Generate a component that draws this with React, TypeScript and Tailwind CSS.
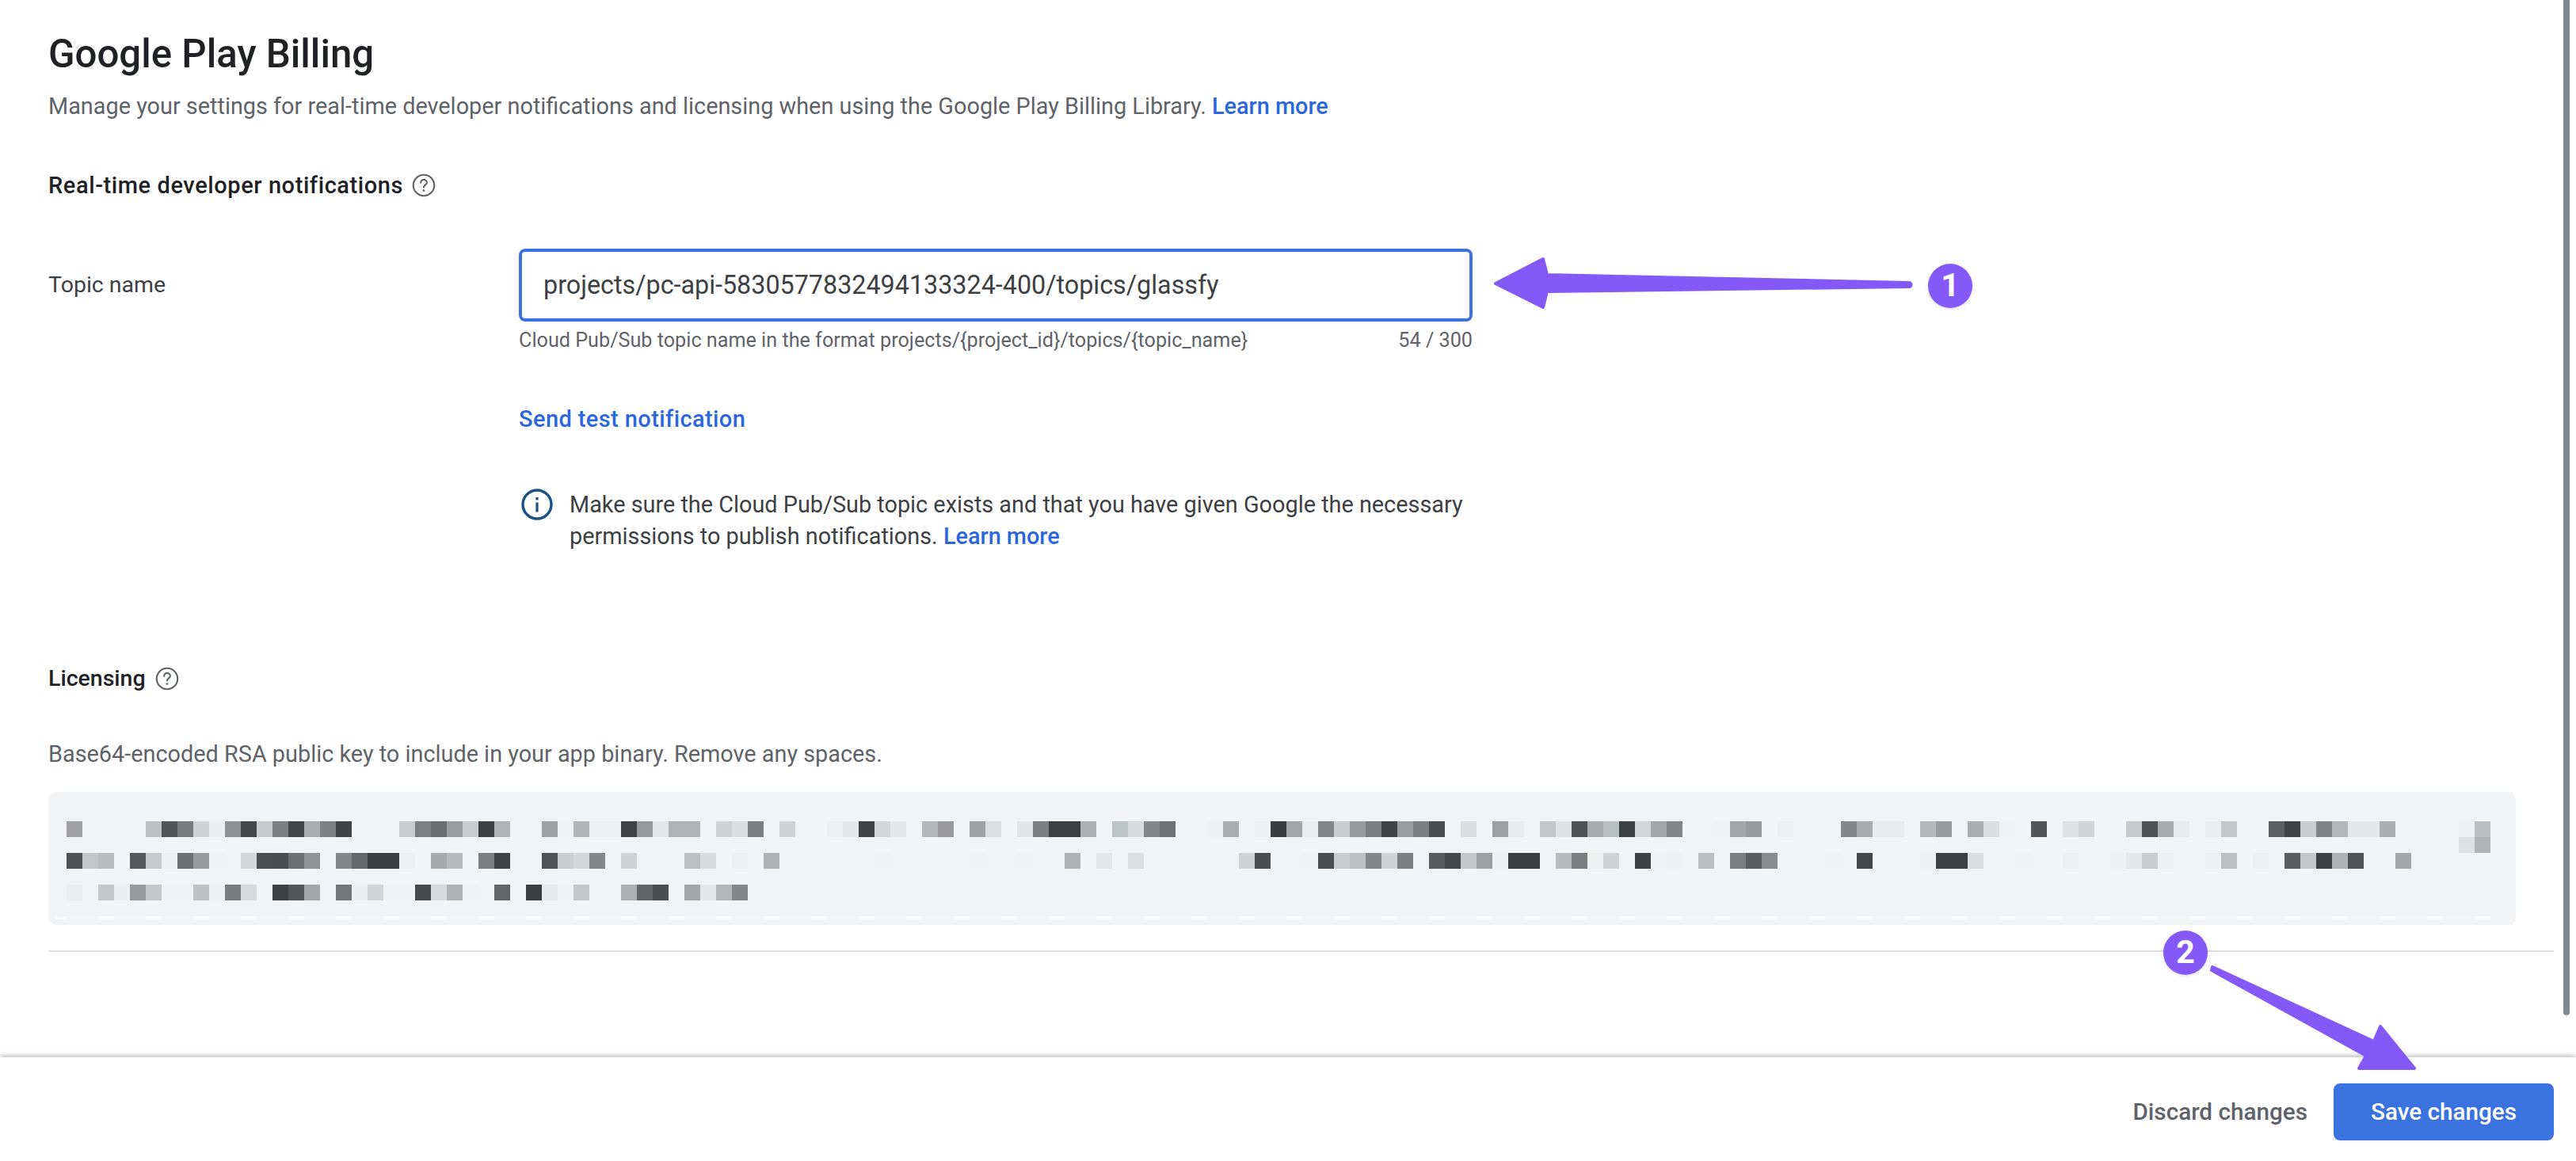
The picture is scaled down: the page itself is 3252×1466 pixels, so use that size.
import React from "react";

const PURPLE = "#8558f8";

const row1 =
  "0:a0a0a2 5:bdc1c3 6:545557 7:7a7b7d 8:d0d1d3 9:eceef0 10:8f9092 11:45484b 12:c9cacc 13:7d7e80 14:434447 15:aaabad 16:7f8082 17:414346 21:cbcccf 22:7f8082 23:6c6d70 24:9b9c9e 25:cbcccf 26:3e4043 27:b0b3b6 30:9fa0a2 31:f0f1f3 32:b4b5b7 33:eeeff1 34:eeeff1 35:404245 36:97989a 37:e3e5e6 38:b1b2b4 39:b1b2b4 41:d0d1d4 42:dcdde0 43:7c7d80 45:d0d1d3 48:eeeff1 49:e6e7e9 50:404245 51:d5d6d8 52:e6e7e9 54:b6b7b9 55:99999b 57:a0a1a3 58:dddee0 60:e2e4e5 61:7c7d7f 62:3d4043 63:3d4043 64:afb0b2 66:bec3c4 67:d9dadc 68:858688 69:717274 72:eff0f2 73:abacae 75:eeeff1 76:3a3d3f 77:a1a5a5 78:ebecee 79:838486 80:cbccce 81:98999b 82:7c7d7f 83:404245 84:9b9c9e 85:7e7f81 86:4a4e51 88:dcdde0 90:9e9fa1 91:eaebed 93:c5c6c8 94:e0e1e3 95:505154 96:a9aaac 97:b9bebe 98:3f4245 99:d3d6d7 100:a5a6a8 101:848587 104:f0f1f3 105:a5a6a8 106:9a9b9d 108:eeeff1 112:858688 113:a9aaac 114:e9eaec 115:e9eaec 117:b6b7b9 118:9a9b9d 120:abaeb0 121:dcdde0 122:f0f1f2 124:535457 126:dfe0e2 127:d2d3d5 130:c9cacc 131:4f5255 132:a9aaac 133:e9eaec 135:ebecee 136:c5c7c8 139:5e5f61 140:404245 141:cbcccf 142:818284 143:b5b6b8 144:e6e7e9 145:e6e7e9 146:acadaf 151:eff0f2 152:bdbec0";
const rowGap = "151:dfe0e2 152:b1b2b4";
const row2 =
  "0:4f5255 1:c5c6c8 2:bbbcbe 4:55585b 5:c9cacc 6:eeeff1 7:6e6f71 8:9a9b9d 9:f0f1f3 11:d5d6d8 12:4c5053 13:4b4e51 14:6e6f71 15:919294 17:858688 18:67686a 19:3c3f42 20:3c3f42 21:eeeff1 23:a8a9ab 24:b9babc 26:7c7d7f 27:404245 30:505356 31:cbcccf 32:d5d6d8 33:858688 35:d0d1d3 39:bfc0c2 40:dadbdd 42:eeeff1 44:b0b1b3 51:f0f1f3 57:f0f1f3 60:f0f1f3 63:b0b1b3 65:e4e5e7 67:dddee0 74:d0d1d3 75:4c4e52 78:f0f1f3 79:4b4f52 80:cbccce 81:bcc0c0 82:858688 83:d0d1d3 84:7e7f81 86:585a5d 87:45484b 88:c6c7c9 89:9e9fa1 90:eff0f2 91:3b3e41 92:3b3e41 94:b9babc 95:7c7d7f 96:eef0f0 97:d0d1d3 99:3f4245 100:f0f1f3 101:eff0f2 103:bcbdbf 105:7c7d7f 106:5b5e61 107:8a8d8e 111:f0f1f2 113:45484b 117:eff0f2 118:3e4043 119:3e4043 120:dcdde0 123:f0f1f3 126:eeeff1 129:eef1f2 130:e6e7e9 131:cbcccf 132:eeeff1 135:eeeff1 136:bdc0c1 138:eeeff1 140:5c5d60 141:c5c6c8 142:3e4043 143:b0b1b3 144:505356 147:a5a8aa";
const row3 =
  "0:ebecee 2:c5c6c8 3:eceef0 4:98999b 5:c6c7c9 6:eff2f3 7:eff2f3 8:c0c1c3 9:eff0f2 10:7a7b7d 11:d8d9db 13:3e4144 14:54575a 15:a5a6a8 17:747577 18:eceef0 19:d2d3d5 20:f0f2f3 21:f0f2f3 22:47494c 23:d8d9db 24:b0b1b3 25:eff2f3 27:646568 29:3c3f42 30:e8e9eb 31:f0f1f3 32:c5c6c8 35:aeafb1 36:636467 37:4c4e51 39:a3a4a6 40:e6e7e9 41:b5b6b8 42:858688";

const CELLS = Array.from({ length: 153 }, (_, i) => i);

function parseRow(data: string) {
  const out: Record<number, string> = {};
  data.split(" ").forEach((part) => {
    const [n, hex] = part.split(":");
    out[Number(n)] = "#" + hex;
  });
  return out;
}

function PixelRow({ data }: { data: string }) {
  const row = parseRow(data);
  return (
    <div className="flex h-5">
      {CELLS.map((i) => (
        <div key={i} className="h-5 w-5 shrink-0" style={{ backgroundColor: row[i] }} />
      ))}
    </div>
  );
}

function HelpIcon() {
  return (
    <svg width="30" height="30" viewBox="0 0 24 24" fill="none" className="shrink-0">
      <circle cx="12" cy="12" r="10.6" stroke="#5f6368" strokeWidth="1.7" />
      <path
        d="M8.9 9.4a3.1 3.1 0 0 1 6.2 0c0 2-3.1 2.3-3.1 4.6"
        stroke="#5f6368"
        strokeWidth="1.7"
        strokeLinecap="round"
      />
      <circle cx="12" cy="17.2" r="1.1" fill="#5f6368" />
    </svg>
  );
}

function InfoIcon() {
  return (
    <svg width="40" height="40" viewBox="0 0 40 40" fill="none" className="shrink-0">
      <circle cx="20" cy="20" r="18" stroke="#1a5285" strokeWidth="3.4" />
      <rect x="18.4" y="17.5" width="3.2" height="12" fill="#1a5285" />
      <rect x="18.4" y="11" width="3.2" height="3.4" fill="#1a5285" />
    </svg>
  );
}

function Badge({ n, className }: { n: string; className: string }) {
  return (
    <div
      className={`absolute flex h-14 w-14 items-center justify-center rounded-full bg-[#8558f8] text-[41px] font-bold text-white shadow-[0_1px_4px_rgba(0,0,0,0.15)] ${className}`}
    >
      {n}
    </div>
  );
}

export default function App() {
  return (
    <div className="relative flex h-[1466px] w-[3252px] flex-col overflow-hidden bg-white font-['Roboto',sans-serif] text-[#202124]">
      <main className="min-h-0 flex-1 pl-[61px] pr-[28px]">
        <h1 className="mt-[40px] text-[49.2px] leading-[56px] font-medium text-[#202124]">Google Play Billing</h1>
        <p className="mt-[18px] text-[28.85px] leading-[40px] text-[#5f6368]">
          Manage your settings for real-time developer notifications and licensing when using the Google Play Billing
          Library. <span className="font-medium text-[#2a66dc]">Learn more</span>
        </p>

        <div className="mt-[60px] flex h-10 items-center gap-[11px]">
          <h2 className="text-[29px] leading-10 font-medium tracking-[0.58px] text-[#202124]">
            Real-time developer notifications
          </h2>
          <HelpIcon />
        </div>

        <div className="mt-[60px] flex">
          <div className="w-[594px] pt-[26px] text-[28.5px] leading-10 text-[#3c4043]">Topic name</div>
          <div className="w-[1204px]">
            <div className="flex h-[92px] items-center rounded-[8px] border-4 border-[#3a72e0] pl-[27px] text-[32.3px] text-[#3c4043]">
              projects/pc-api-5830577832494133324-400/topics/glassfy
            </div>
            <div className="mt-[10px] flex items-center justify-between text-[25.2px] leading-7 text-[#5f6368]">
              <span>Cloud Pub/Sub topic name in the format projects/{"{project_id}"}/topics/{"{topic_name}"}</span>
              <span>54 / 300</span>
            </div>
            <div className="mt-[65px] text-[29px] leading-10 font-medium tracking-[0.4px] text-[#2a66dc]">
              Send test notification
            </div>
            <div className="mt-[68px] flex gap-[21px] pl-[3px]">
              <InfoIcon />
              <p className="text-[28.85px] leading-10 text-[#3c4043]">
                Make sure the Cloud Pub/Sub topic exists and that you have given Google the necessary permissions to
                publish notifications. <span className="font-medium text-[#2a66dc]">Learn more</span>
              </p>
            </div>
          </div>
        </div>

        <div className="mt-[140px] flex h-10 items-center gap-[12px]">
          <h2 className="text-[28.5px] leading-10 font-medium text-[#202124]">Licensing</h2>
          <HelpIcon />
        </div>
        <p className="mt-[55px] text-[28.85px] leading-10 text-[#5f6368]">
          Base64-encoded RSA public key to include in your app binary. Remove any spaces.
        </p>

        <div className="mt-[28px] h-[168px] w-[3115px] rounded-[10px] bg-[#f1f3f4] pt-[37px] pl-[23px]">
          <PixelRow data={row1} />
          <PixelRow data={rowGap} />
          <PixelRow data={row2} />
          <div className="h-5" />
          <PixelRow data={row3} />
          <div className="mt-5 ml-[-14px] flex h-1">
            <div className="h-1 w-[14px] bg-[#f9fafa]" />
            {CELLS.map((i) => (
              <div key={i} className={`h-1 w-5 shrink-0 ${i % 3 === 2 ? "bg-[#fafbfb]" : "bg-[#f4f5f6]"}`} />
            ))}
          </div>
        </div>

        <div className="mt-[32px] h-[2px] w-[3163px] bg-[#dedde4]" />
      </main>

      <footer className="relative flex h-[131px] shrink-0 items-center justify-end gap-[33px] pt-[7px] pr-[28px] shadow-[0_-2px_6px_rgba(60,64,67,0.35)]">
        <span className="text-[29.7px] font-medium text-[#5f6368]">Discard changes</span>
        <button className="h-[72px] w-[278px] rounded-[8px] bg-[#3a72e0] text-[29.7px] font-medium text-white">
          Save changes
        </button>
      </footer>

      {/* scrollbar */}
      <div className="absolute top-0 left-[3236px] h-[1282px] w-2 rounded-b-[4px] bg-[#82878a]" />

      {/* annotations */}
      <svg className="absolute top-0 left-0" width="3252" height="1466" fill={PURPLE} stroke={PURPLE} strokeWidth="4" strokeLinejoin="round">
        <path d="M1888 358L1948 327L1953 347L2411 357Q2414 360 2411 362L1953 368L1948 388Z" />
        <path d="M2793 1221L2997 1315L3005 1296L3048 1349L2978 1349L2987 1333L2792 1225Z" />
      </svg>
      <Badge n="1" className="top-[333px] left-[2434px]" />
      <Badge n="2" className="top-[1175px] left-[2731px]" />
    </div>
  );
}
